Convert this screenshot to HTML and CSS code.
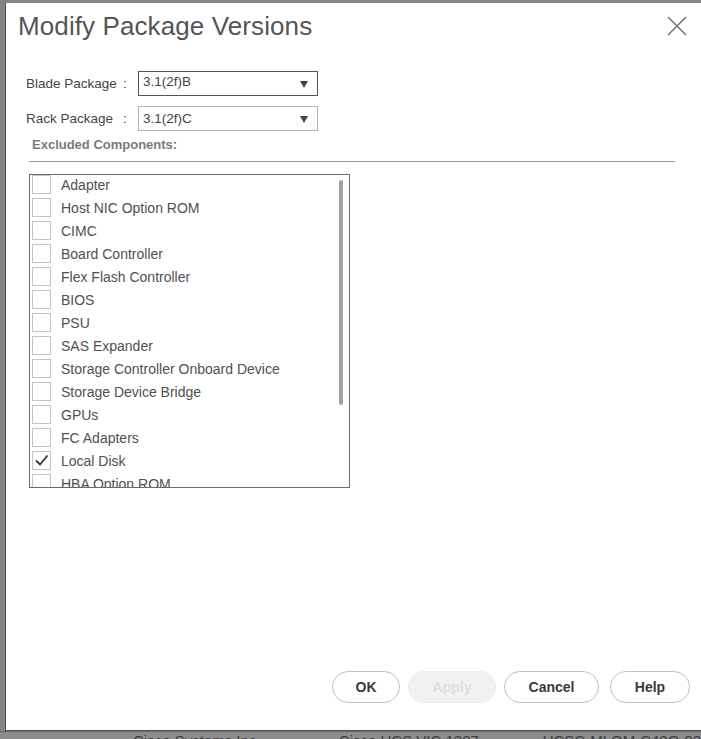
FILE: index.html
```html
<!DOCTYPE html>
<html>
<head>
<meta charset="utf-8">
<link rel="stylesheet" href="styles.css">
</head>
<body>
<div class="dialog">
  <div class="header">
    <h1 class="title">Modify Package Versions</h1>
    <svg class="close" width="20" height="20" viewBox="0 0 20 20"><path d="M1 1 L19 19 M19 1 L1 19" stroke="#6a6a6a" stroke-width="1.4" fill="none"/></svg>
  </div>
  <div class="form">
    <div class="row">
      <div class="label"><span class="name">Blade Package</span><span class="colon">:</span></div>
      <div class="select select--focus"><span class="value">3.1(2f)B</span><span class="arrow"></span></div>
    </div>
    <div class="row">
      <div class="label"><span class="name">Rack Package</span><span class="colon">:</span></div>
      <div class="select"><span class="value">3.1(2f)C</span><span class="arrow"></span></div>
    </div>
  </div>
  <div class="section-title">Excluded Components:</div>
  <div class="rule"></div>
  <div class="listbox">
    <div class="item"><span class="check"></span><span class="text">Adapter</span></div>
    <div class="item"><span class="check"></span><span class="text">Host NIC Option ROM</span></div>
    <div class="item"><span class="check"></span><span class="text">CIMC</span></div>
    <div class="item"><span class="check"></span><span class="text">Board Controller</span></div>
    <div class="item"><span class="check"></span><span class="text">Flex Flash Controller</span></div>
    <div class="item"><span class="check"></span><span class="text">BIOS</span></div>
    <div class="item"><span class="check"></span><span class="text">PSU</span></div>
    <div class="item"><span class="check"></span><span class="text">SAS Expander</span></div>
    <div class="item"><span class="check"></span><span class="text">Storage Controller Onboard Device</span></div>
    <div class="item"><span class="check"></span><span class="text">Storage Device Bridge</span></div>
    <div class="item"><span class="check"></span><span class="text">GPUs</span></div>
    <div class="item"><span class="check"></span><span class="text">FC Adapters</span></div>
    <div class="item"><span class="check checked"><svg width="17" height="17" viewBox="0 0 17 17"><path d="M3 8.5 L7 12.5 L14.5 3.5" stroke="#333" stroke-width="1.8" fill="none"/></svg></span><span class="text">Local Disk</span></div>
    <div class="item"><span class="check"></span><span class="text">HBA Option ROM</span></div>
    <div class="scrollbar"></div>
  </div>
  <div class="footer">
    <button class="btn">OK</button>
    <button class="btn btn--apply" disabled>Apply</button>
    <button class="btn btn--cancel">Cancel</button>
    <button class="btn btn--help">Help</button>
  </div>
</div>
<div class="behind">
  <span class="cell c1">Cisco Systems Inc</span>
  <span class="cell c2">Cisco UCS VIC 1387</span>
  <span class="cell c3">UCSC-MLOM-C40Q-03</span>
</div>
</body>
</html>
```

FILE: styles.css
```css
html, body {
  margin: 0;
  padding: 0;
}
body {
  width: 701px;
  height: 739px;
  overflow: hidden;
  background: #858585;
  font-family: "Liberation Sans", Arial, sans-serif;
}
.dialog {
  margin: 3px 0 0 5px;
  width: 696px;
  height: 728px;
  box-sizing: border-box;
  background: #fff;
  border-left: 1px solid #4d4d4d;
  border-bottom: 1px solid #555;
  display: flex;
  flex-direction: column;
}
.header {
  display: flex;
  justify-content: space-between;
  align-items: flex-start;
  padding: 8px 14px 0 12px;
}
.title {
  margin: 0;
  font-weight: normal;
  font-size: 26px;
  letter-spacing: 0.1px;
  line-height: 30px;
  color: #555;
}
.close {
  margin-top: 5px;
}
.form {
  margin-top: 30px;
  padding-left: 20px;
  display: flex;
  flex-direction: column;
  gap: 10px;
}
.row {
  display: flex;
  align-items: center;
}
.label {
  width: 112px;
  display: flex;
  font-size: 13.5px;
  color: #444;
}
.name {
  width: 97px;
}
.select {
  position: relative;
  width: 180px;
  height: 25px;
  box-sizing: border-box;
  border: 1px solid #b5b5b5;
  display: flex;
  align-items: flex-start;
  padding: 4px 0 0 4px;
  font-size: 13.5px;
  color: #444;
}
.select--focus {
  border-color: #555;
  padding-top: 2px;
}
.value {
  flex: 1;
  line-height: 16px;
}
.arrow {
  width: 0;
  height: 0;
  margin: 6px 9px 0 0;
  border-left: 4px solid transparent;
  border-right: 4px solid transparent;
  border-top: 7px solid #444;
}
.select .arrow {
  margin-top: 5px;
}
.select--focus .arrow {
  margin-top: 7px;
}
.section-title {
  margin: 6px 0 0 26px;
  font-size: 13px;
  line-height: 15px;
  font-weight: bold;
  color: #7a7a7a;
}
.rule {
  margin: 9px 26px 0 23px;
  height: 1px;
  background: #9a9a9a;
}
.listbox {
  position: relative;
  margin: 12px 0 0 23px;
  width: 321px;
  height: 314px;
  box-sizing: border-box;
  border: 1px solid #6a6a6a;
  padding: 0 0 0 2px;
  overflow: hidden;
}
.item {
  display: flex;
  align-items: center;
  height: 19px;
  margin-bottom: 4px;
}
.check {
  width: 19px;
  height: 19px;
  box-sizing: border-box;
  border: 1px solid #c4c4c4;
  display: flex;
  align-items: center;
  justify-content: center;
  flex: none;
}
.text {
  margin-left: 10px;
  font-size: 14px;
  color: #505050;
}
.scrollbar {
  position: absolute;
  left: 309px;
  top: 5px;
  width: 4px;
  height: 225px;
  border-radius: 2px;
  background: #a0a0a0;
}
.footer {
  margin-top: auto;
  margin-bottom: 27px;
  padding-right: 11px;
  display: flex;
  justify-content: flex-end;
  gap: 8px;
}
.btn {
  height: 32px;
  width: 68px;
  border: 1px solid #c2c2c2;
  border-radius: 16px;
  background: #fff;
  font-family: "Liberation Sans", Arial, sans-serif;
  font-weight: bold;
  font-size: 14px;
  color: #3a3a3a;
  padding: 0;
}
.btn--apply {
  width: 88px;
  background: #f1f1f1;
  border-color: #ececec;
  color: #e0e0e0;
}
.btn--cancel {
  width: 95px;
}
.btn--help {
  width: 80px;
  margin-left: 3px;
}
.behind {
  height: 8px;
  overflow: hidden;
  display: flex;
  border-top: 1px solid #666;
  background: #8c8c8c;
}
.cell {
  font-size: 15px;
  line-height: 15px;
  color: #3a3a3a;
  margin-top: 1px;
  white-space: nowrap;
}
.c1 { margin-left: 133px; width: 207px; }
.c2 { width: 205px; }
.c3 { }
```
